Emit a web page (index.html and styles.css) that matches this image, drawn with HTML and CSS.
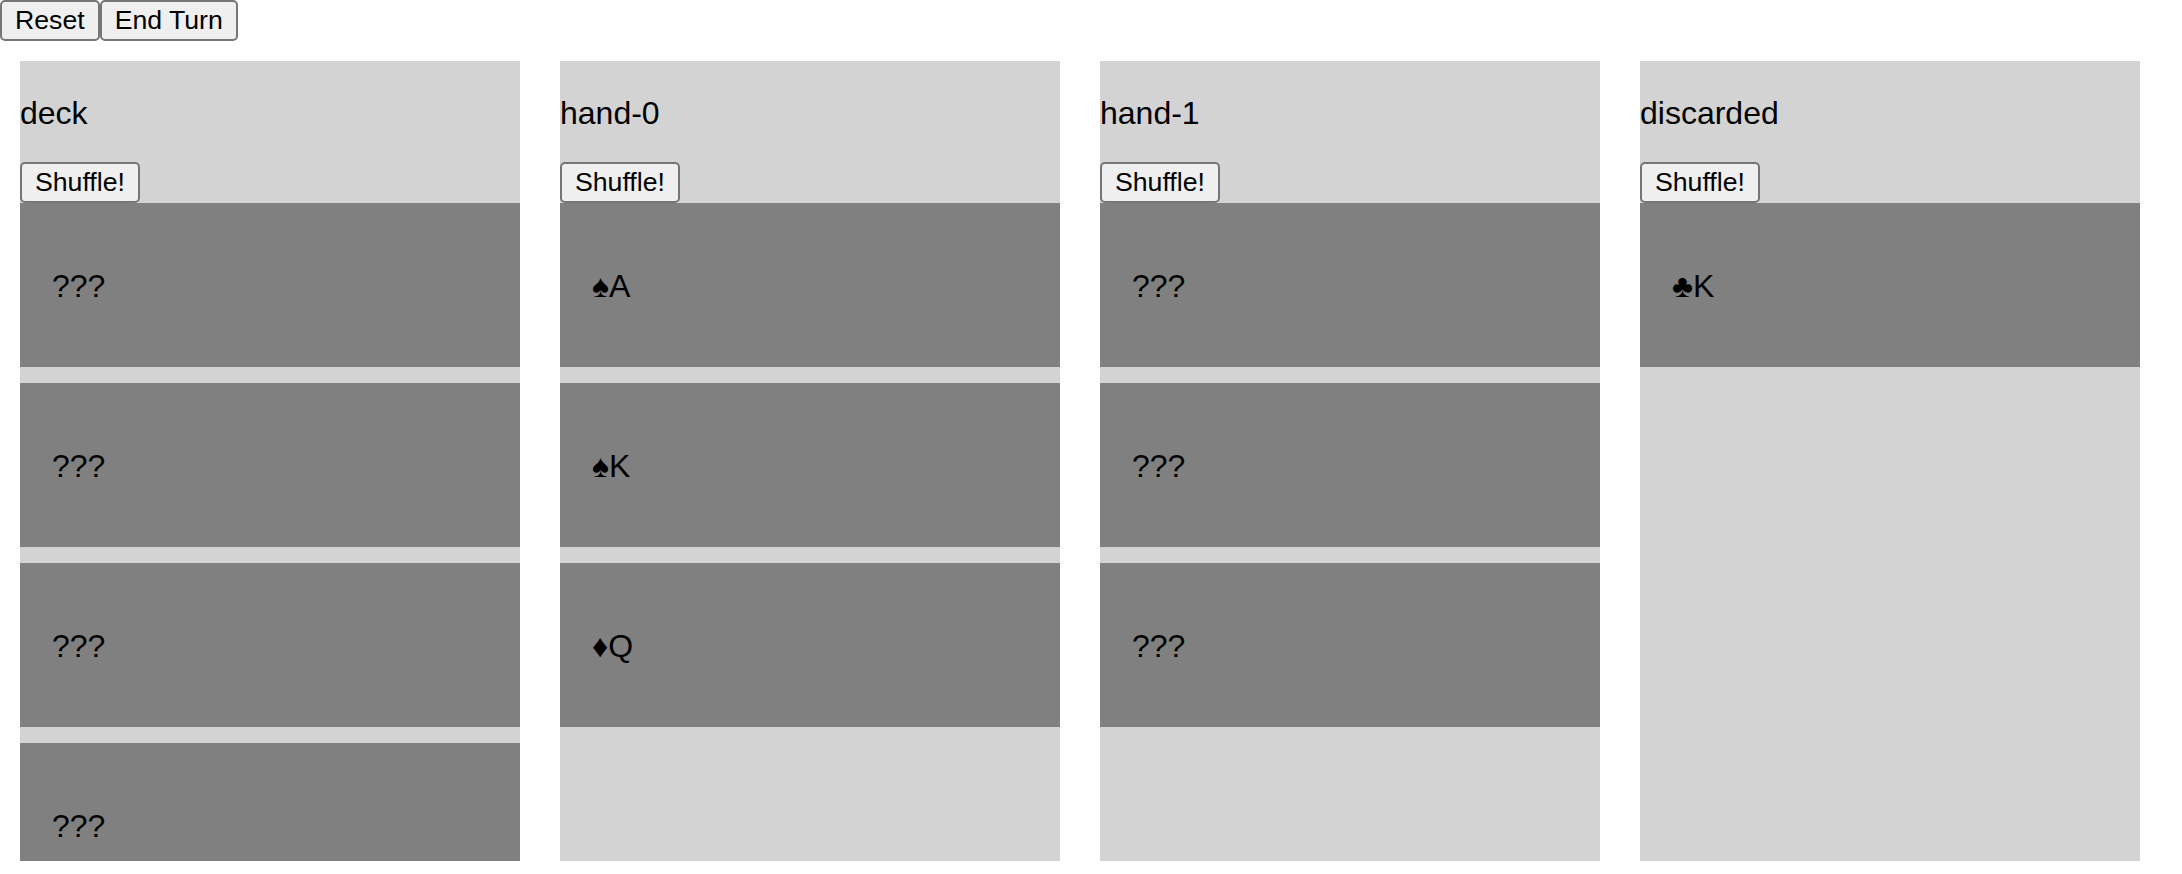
FILE: index.html
```html
<!DOCTYPE html>
<html lang="en">
<head>
  <meta charset="UTF-8">
  <title>Cards</title>
  <link rel="stylesheet" href="styles.css">
</head>
<body>
  <div class="controls">
    <button class="btn">Reset</button><button class="btn">End Turn</button>
  </div>
  <div class="piles">
    <div class="pile">
      <p class="pile-name">deck</p>
      <button class="btn">Shuffle!</button>
      <div class="card">???</div>
      <div class="card">???</div>
      <div class="card">???</div>
      <div class="card">???</div>
    </div>
    <div class="pile">
      <p class="pile-name">hand-0</p>
      <button class="btn">Shuffle!</button>
      <div class="card">♠A</div>
      <div class="card">♠K</div>
      <div class="card">♦Q</div>
    </div>
    <div class="pile">
      <p class="pile-name">hand-1</p>
      <button class="btn">Shuffle!</button>
      <div class="card">???</div>
      <div class="card">???</div>
      <div class="card">???</div>
    </div>
    <div class="pile">
      <p class="pile-name">discarded</p>
      <button class="btn">Shuffle!</button>
      <div class="card">♣K</div>
    </div>
  </div>
</body>
</html>
```

FILE: styles.css
```css
* { box-sizing: border-box; }
body {
  margin: 0;
  font-family: 'Liberation Sans', Arial, sans-serif;
  font-size: 32px;
  color: #000;
  background: #fff;
}
.controls {
  display: flex;
}
.btn {
  font-family: 'Liberation Sans', Arial, sans-serif;
  font-size: 26.67px;
  padding: 3px 13px;
  border: 2px solid #767676;
  border-radius: 5px;
  background: #efefef;
  color: #000;
  cursor: pointer;
}
.piles {
  display: flex;
}
.pile {
  flex: none;
  width: 500px;
  height: 800px;
  margin: 20px;
  background: #d3d3d3;
  overflow: hidden;
}
.pile-name {
  margin: 34px 0 30px;
}
.pile .btn { display: block; }
.card {
  padding: 65px 32px 62px;
  line-height: 37px;
  margin-bottom: 16px;
  background: #808080;
}
```
